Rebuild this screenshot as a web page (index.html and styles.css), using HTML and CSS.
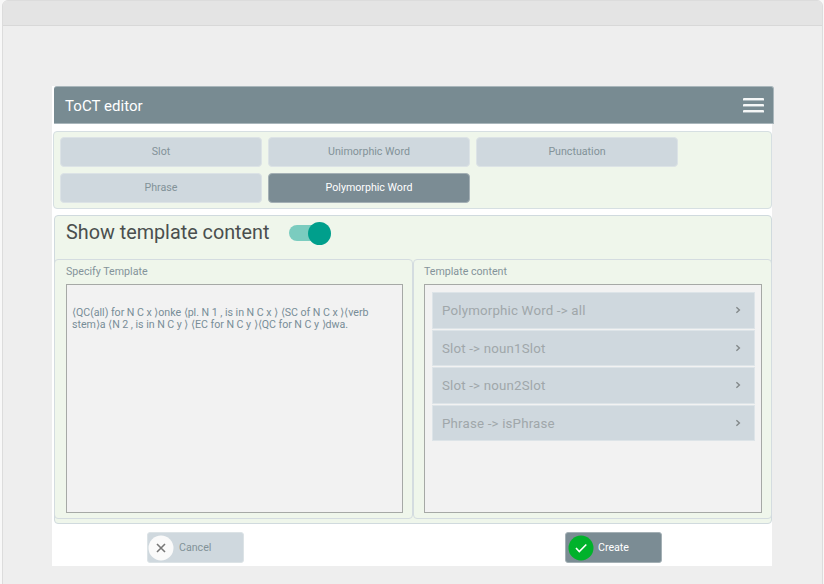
FILE: index.html
```html
<!DOCTYPE html>
<html lang="en">
<head>
<meta charset="utf-8">
<title>ToCT editor</title>
<link rel="stylesheet" href="styles.css">
</head>
<body>
<div class="window">
  <div class="titlebar"></div>
  <main class="app">
    <header class="header">
      <h1>ToCT editor</h1>
      <div class="menu"><i></i><i></i><i></i></div>
    </header>
    <section class="types">
      <button>Slot</button>
      <button>Unimorphic Word</button>
      <button>Punctuation</button>
      <button>Phrase</button>
      <button class="active">Polymorphic Word</button>
    </section>
    <section class="content">
      <div class="show"><h2>Show template content</h2><span class="switch"></span></div>
      <div class="columns">
        <div class="column">
          <label>Specify Template</label>
          <div class="box text">
            <p>⟨QC(all) for N C x ⟩onke ⟨pl. N 1 , is in N C x ⟩ ⟨SC of N C x ⟩⟨verb</p>
            <p>stem⟩a ⟨N 2 , is in N C y ⟩ ⟨EC for N C y ⟩⟨QC for N C y ⟩dwa.</p>
          </div>
        </div>
        <div class="column">
          <label>Template content</label>
          <div class="box list">
            <div class="item"><span>Polymorphic Word -&gt; all</span><svg viewBox="0 0 6 8"><path d="M1.4 1.2 4.4 4 1.4 6.8"/></svg></div>
            <div class="item"><span>Slot -&gt; noun1Slot</span><svg viewBox="0 0 6 8"><path d="M1.4 1.2 4.4 4 1.4 6.8"/></svg></div>
            <div class="item"><span>Slot -&gt; noun2Slot</span><svg viewBox="0 0 6 8"><path d="M1.4 1.2 4.4 4 1.4 6.8"/></svg></div>
            <div class="item"><span>Phrase -&gt; isPhrase</span><svg viewBox="0 0 6 8"><path d="M1.4 1.2 4.4 4 1.4 6.8"/></svg></div>
          </div>
        </div>
      </div>
    </section>
    <footer class="actions">
      <button class="cancel"><svg viewBox="0 0 26 26"><circle cx="13" cy="13" r="12.5"/><path d="M9 9l8 8M17 9l-8 8"/></svg><span>Cancel</span></button>
      <button class="create"><svg viewBox="0 0 26 26"><circle cx="13" cy="13" r="12.5"/><path d="M8 13l3.3 3.5 7-7"/></svg><span>Create</span></button>
    </footer>
  </main>
</div>
</body>
</html>
```
FILE: styles.css
```css
* { box-sizing: border-box; }
body {
  margin: 0;
  height: 584px;
  overflow: hidden;
  background: #f8f8f8;
  font-family: Roboto, sans-serif;
  font-size: 10.65px;
  color: #84939a;
}
h1, h2, p { margin: 0; font-weight: 400; white-space: nowrap; }
button { font: inherit; color: #829298; border: 1px solid #dce3e6; padding: 0 0 1px; background: #cfd8de; }
.window {
  width: 821px;
  height: 590px;
  margin-left: 2px;
  background: #eee;
  border: 1px solid #dcdcdc;
  border-radius: 6px 6px 0 0;
}
.titlebar { height: 25px; background: #e4e4e4; border-bottom: 1px solid #d8d8d8; border-radius: 5px 5px 0 0; }
.app { width: 720px; height: 480px; margin: 60px 0 0 49px; background: #fff; display: flex; flex-direction: column; }
.header {
  flex: none;
  width: 720px;
  height: 38px;
  margin-left: 2px;
  padding: 0 9px 0 11px;
  display: flex;
  align-items: center;
  justify-content: space-between;
  background: #788b92;
  border: solid #a9b6bb;
  border-width: 1px 1px 1px 0;
  border-radius: 3px 3px 0 0;
}
h1 { font-size: 15px; line-height: 18px; color: #fff; letter-spacing: .05px; padding-top: 1px; }
.menu { width: 21px; display: flex; flex-direction: column; gap: 3px; }
.menu i { height: 3px; background: #f5f7f7; border: solid #aebabf; border-width: 0 0 1px; border-radius: 1px; }
.types {
  flex: none;
  width: 719px;
  height: 78px;
  margin: 7px 0 0 1px;
  padding: 5px 6px;
  display: grid;
  grid-template-columns: repeat(3, 202px);
  grid-auto-rows: 30px;
  gap: 6px;
  background: #eff6eb;
  border: 1px solid #d6dfe2;
  border-radius: 4px;
}
.types button { border-radius: 4px; }
.types .active, .create { background: #7b8c94; border-color: #a4b0b5; color: #fff; }
.content {
  flex: none;
  width: 718px;
  height: 309px;
  margin: 6px 0 0 2px;
  background: #eff6eb;
  border: 1px solid #d0dade;
  border-radius: 4px;
}
.show { height: 43px; padding: 2px 0 0 11px; display: flex; }
h2 { font-size: 19.8px; line-height: 30px; color: #4a4f4e; }
.switch { position: relative; width: 40px; height: 16px; margin: 7px 0 0 19.5px; border-radius: 8px; background: #7bccbf; }
.switch::after { content: ""; position: absolute; right: -2px; top: -3px; width: 23px; height: 23px; border-radius: 50%; background: #009f8c; }
.columns { display: flex; width: 718px; margin-left: -1px; }
.column { width: 359px; height: 260px; padding: 4px 10px 0 11px; border: 1px solid #d4dce0; border-radius: 4px; }
.column + .column { padding-left: 10px; }
.column label { display: block; height: 20px; line-height: 15px; }
.box { width: 337px; height: 229px; background: #f2f2f2; border: 1px solid #a6a9a6; }
.column + .column .box { width: 338px; }
.text { padding: 22px 5px; line-height: 12px; letter-spacing: -.03px; color: #788d97; }
.list { padding: 7.4px 6px 0 7px; display: flex; flex-direction: column; gap: 1px; }
.item {
  height: 36.5px;
  padding: 0 13px 0 9px;
  display: flex;
  align-items: center;
  justify-content: space-between;
  font-size: 13.3px;
  letter-spacing: .18px;
  color: #a0a7aa;
  background: #cfd8de;
  border: 1px solid #dde4e8;
}
.item svg { width: 6px; height: 8px; margin-top: -1px; fill: none; stroke: #828889; stroke-width: 1.4; }
.actions { display: flex; padding: 8px 0 0 95px; }
.actions button { width: 97px; height: 31px; display: flex; align-items: center; border-radius: 3px; }
.actions svg { width: 26px; height: 26px; flex: none; margin-top: 1px; }
.actions span { margin-left: 5px; }
.cancel circle { fill: #fafafa; }
.actions path { fill: none; stroke: #777; stroke-width: 1.6; }
.create { margin-left: 321px; }
.create svg { margin-left: 1px; }
.create circle { fill: #00b22b; }
.actions .create path { stroke: #fff; }
.actions .create { padding-left: 1px; }
.actions .create span { margin-left: 4px; }
```
